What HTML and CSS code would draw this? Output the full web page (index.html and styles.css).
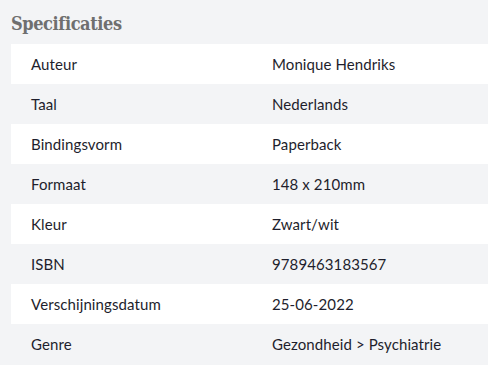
FILE: index.html
```html
<!DOCTYPE html>
<html lang="nl">
<head>
<meta charset="utf-8">
<link rel="stylesheet" href="styles.css">
</head>
<body>
<section class="specs">
  <h2 class="specs-title">Specificaties</h2>
  <table class="specs-table">
    <colgroup><col class="col-label"><col class="col-value"></colgroup>
    <tr><td>Auteur</td><td>Monique Hendriks</td></tr>
    <tr><td>Taal</td><td>Nederlands</td></tr>
    <tr><td>Bindingsvorm</td><td>Paperback</td></tr>
    <tr><td>Formaat</td><td>148 x 210mm</td></tr>
    <tr><td>Kleur</td><td>Zwart/wit</td></tr>
    <tr><td>ISBN</td><td>9789463183567</td></tr>
    <tr><td>Verschijningsdatum</td><td>25-06-2022</td></tr>
    <tr><td>Genre</td><td>Gezondheid &gt; Psychiatrie</td></tr>
  </table>
</section>
</body>
</html>
```
FILE: styles.css
```css
html, body {
  margin: 0;
  padding: 0;
  background: #f3f4f6;
}
.specs {
  padding: 12px 0 0 11px;
}
.specs-title {
  margin: 0 0 8px 0;
  font-family: "DejaVu Serif Condensed", "DejaVu Serif", serif;
  font-weight: bold;
  font-size: 18px;
  letter-spacing: -0.4px;
  line-height: 24px;
  color: #6f6f6f;
}
.specs-table {
  width: 100%;
  table-layout: fixed;
  border-collapse: collapse;
  font-family: "Lato", sans-serif;
  font-size: 15px;
  letter-spacing: 0.1px;
  color: #1e1e2c;
}
.col-label {
  width: 261px;
}
.specs-table td {
  height: 40px;
  padding: 0 20px;
  vertical-align: middle;
  white-space: nowrap;
}
.specs-table td:last-child {
  padding-left: 0;
}
.specs-table tr:nth-child(odd) {
  background: #ffffff;
}
.specs-table tr:nth-child(even) {
  background: #f3f4f6;
}
```
